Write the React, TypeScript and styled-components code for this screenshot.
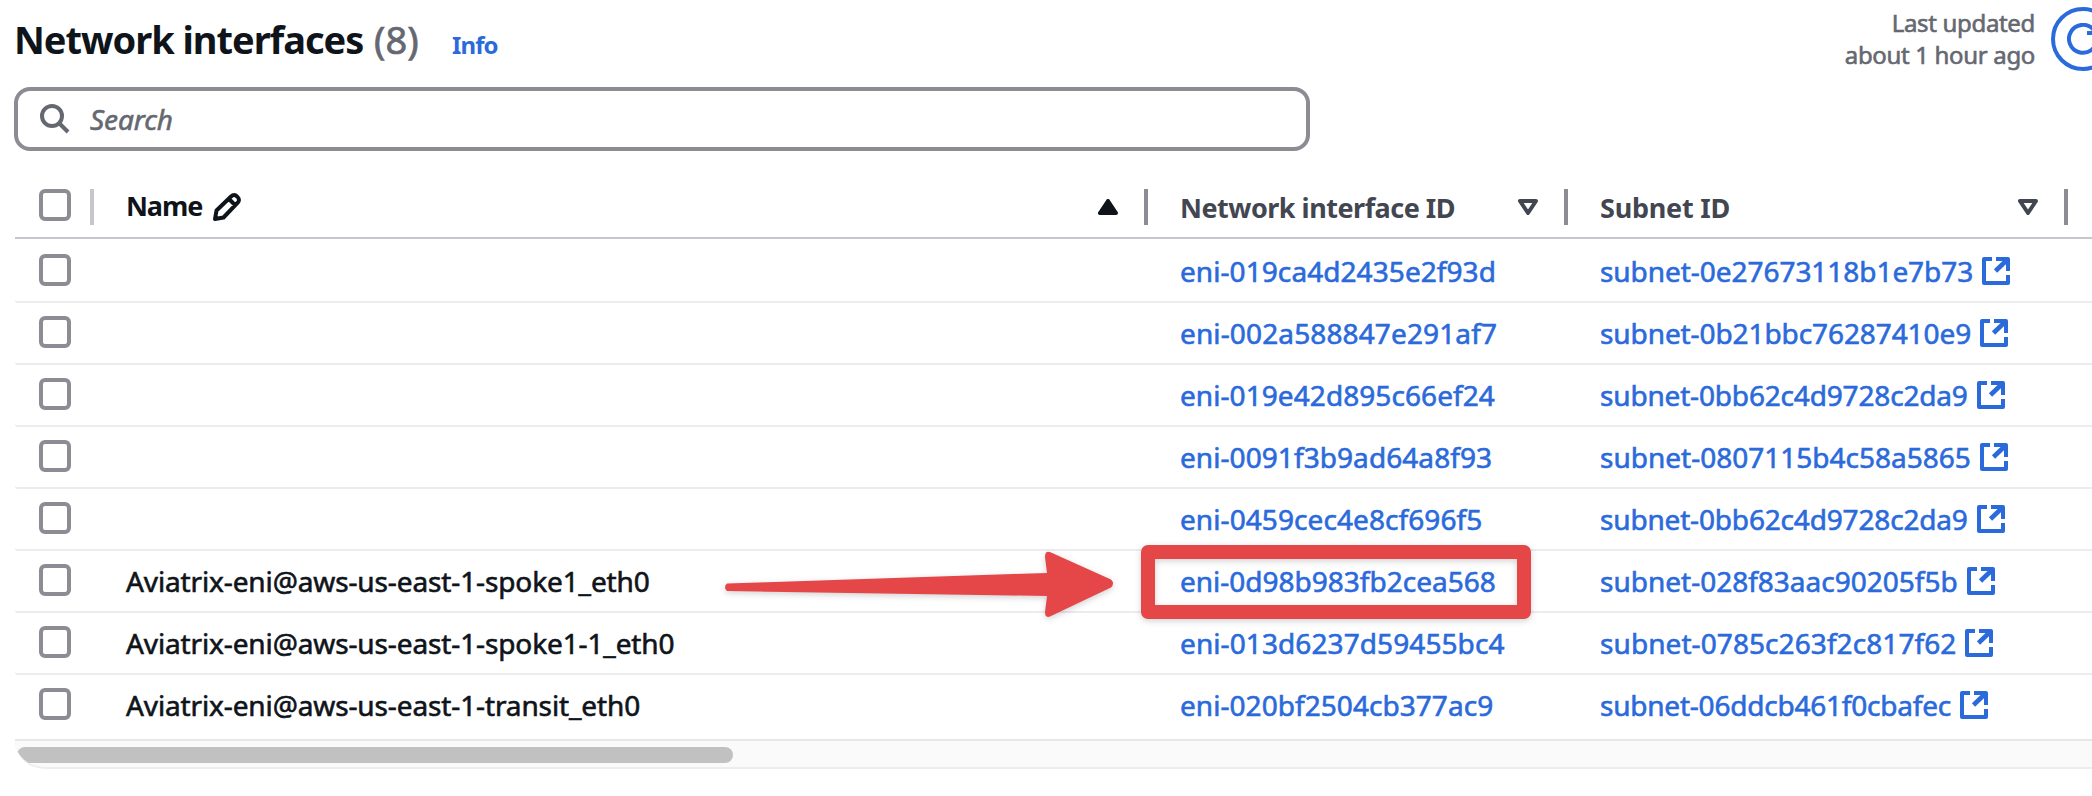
import React from 'react';
import styled, { createGlobalStyle } from 'styled-components';

const Global = createGlobalStyle`
  * { box-sizing: border-box; }
  html, body { margin: 0; padding: 0; background: #fff; overflow: hidden; }
  body { font-family: "Noto Sans", "Open Sans", sans-serif; color: #0f141a; }
`;

const Page = styled.main`
  position: relative;
  width: 2092px;
  height: 796px;
  overflow: hidden;
  background: #fff;
  padding-left: 14px;
`;

const Header = styled.header`
  display: flex;
  align-items: flex-start;
  justify-content: space-between;
  height: 87px;
  width: 2101px;
`;

const Heading = styled.div`
  display: flex;
  align-items: baseline;
  padding-top: 13px;
  line-height: 52px;
  white-space: nowrap;
`;

const Title = styled.h1`
  margin: 0;
  width: 360px;
  font-size: 38px;
  font-weight: 700;
  letter-spacing: -1.03px;
`;

const Counter = styled.span`
  width: 78px;
  font-size: 38px;
  color: #656871;
  -webkit-text-stroke: 0.7px currentColor;
`;

const InfoLink = styled.a`
  font-size: 24px;
  font-weight: 700;
  color: #2b6adb;
  letter-spacing: -0.9px;
`;

const Status = styled.div`
  display: flex;
  align-items: flex-start;
  gap: 16px;
`;

const Updated = styled.p`
  margin: 7px 0 0;
  font-size: 24px;
  line-height: 32px;
  text-align: right;
  color: #656871;
  letter-spacing: -0.33px;
  -webkit-text-stroke: 0.6px currentColor;
`;

const Line = styled.span`
  display: block;
`;

const RefreshButton = styled.button`
  display: flex;
  align-items: center;
  justify-content: center;
  width: 64px;
  height: 64px;
  margin-top: 7px;
  padding: 0;
  border: 4px solid #2b6adb;
  border-radius: 50%;
  background: #fff;
`;

const SearchBox = styled.div`
  display: flex;
  align-items: center;
  gap: 20px;
  width: 1296px;
  height: 64px;
  padding-left: 22px;
  border: 4px solid #8c8c94;
  border-radius: 16px;
  color: #656871;
`;

const Placeholder = styled.span`
  font-size: 28px;
  font-style: italic;
  letter-spacing: -0.1px;
  -webkit-text-stroke: 0.6px currentColor;
`;

const Table = styled.div`
  margin-left: 1px;
  width: 2077px;
  overflow: hidden;
`;

const GridRow = styled.div`
  display: grid;
  grid-template-columns: 79px 1054px 420px 500px 24px;
`;

const HeadRow = styled(GridRow)`
  height: 88px;
  padding-top: 38px;
  border-bottom: 2px solid #c6c6cd;
  border-top-left-radius: 3px;
`;

const HeadCell = styled.div<{ $muted?: boolean }>`
  display: flex;
  height: 36px;
  align-items: flex-start;
  padding-left: 32px;
  border-right: 4px solid #8c8c94;
  color: ${(p) => (p.$muted ? '#424650' : '#0f141a')};
`;

const SelectHead = styled.div`
  height: 36px;
  padding-left: 24px;
  border-right: 4px solid #c6c6cd;
`;

const HeadLabel = styled.span<{ $track: number; $line: number }>`
  flex: 1;
  display: flex;
  align-items: flex-start;
  gap: 11px;
  font-size: 27px;
  font-weight: 700;
  line-height: ${(p) => p.$line}px;
  white-space: nowrap;
  letter-spacing: ${(p) => p.$track}px;
`;

const EditIcon = styled.svg`
  width: 28px;
  height: 28px;
  margin-top: 4px;
`;

const SortIcon = styled.svg`
  width: 20px;
  height: 16px;
  margin: 10px 26px 0 0;
`;

const Row = styled(GridRow)<{ $first?: boolean; $last?: boolean }>`
  height: ${(p) => (p.$first || p.$last ? 64 : 62)}px;
  padding-top: ${(p) => (p.$first ? 15 : 13)}px;
  border-bottom: ${(p) => (p.$last ? 'none' : '2px solid #ebebf0')};
  border-bottom-left-radius: 3px;
`;

const Cell = styled.div`
  display: flex;
  align-items: flex-start;
  padding-left: 32px;
  font-size: 28px;
  line-height: 34px;
  white-space: nowrap;
  -webkit-text-stroke: 0.6px currentColor;
`;

const SelectCell = styled.div`
  padding-left: 24px;
`;

const Checkbox = styled.span`
  display: block;
  width: 32px;
  height: 32px;
  border: 4px solid #8c8c94;
  border-radius: 6px;
`;

const Name = styled.span`
  letter-spacing: -0.12px;
`;

const Link = styled.a<{ $track: number }>`
  color: #2b6adb;
  letter-spacing: ${(p) => p.$track}px;
`;

const ExternalIcon = styled.svg`
  width: 28px;
  height: 28px;
  margin: 3px 0 0 9px;
`;

const ScrollTrack = styled.div`
  height: 30px;
  width: 2077px;
  padding-top: 6px;
  border-top: 2px solid #e7e7e7;
  border-bottom: 2px solid #ededed;
  border-bottom-left-radius: 30px 28px;
  background: #fafafa;
  overflow: hidden;
`;

const ScrollThumb = styled.div`
  width: 716px;
  height: 16px;
  margin-left: 2px;
  border-radius: 8px;
  background: #c1c1c1;
`;

const Highlight = styled.div`
  position: absolute;
  left: 1141px;
  top: 545px;
  width: 390px;
  height: 74px;
  border: 14px solid #e54749;
  border-radius: 7px;
  filter: drop-shadow(0 2px 3px rgba(0, 0, 0, 0.18));
`;

const Arrow = styled.svg`
  position: absolute;
  left: 715px;
  top: 540px;
  width: 410px;
  height: 90px;
  filter: drop-shadow(0 2px 3px rgba(0, 0, 0, 0.18));
`;

type Eni = { name?: string; eni: string; subnet: string; eniTrack: number; subnetTrack: number };

const rows: Eni[] = [
  { eni: 'eni-019ca4d2435e2f93d', subnet: 'subnet-0e27673118b1e7b73', eniTrack: 0.07, subnetTrack: -0.05 },
  { eni: 'eni-002a588847e291af7', subnet: 'subnet-0b21bbc76287410e9', eniTrack: 0.13, subnetTrack: -0.09 },
  { eni: 'eni-019e42d895c66ef24', subnet: 'subnet-0bb62c4d9728c2da9', eniTrack: 0.07, subnetTrack: -0.17 },
  { eni: 'eni-0091f3b9ad64a8f93', subnet: 'subnet-0807115b4c58a5865', eniTrack: 0.07, subnetTrack: 0 },
  { eni: 'eni-0459cec4e8cf696f5', subnet: 'subnet-0bb62c4d9728c2da9', eniTrack: 0.08, subnetTrack: -0.17 },
  { name: 'Aviatrix-eni@aws-us-east-1-spoke1_eth0', eni: 'eni-0d98b983fb2cea568', subnet: 'subnet-028f83aac90205f5b', eniTrack: 0, subnetTrack: 0 },
  { name: 'Aviatrix-eni@aws-us-east-1-spoke1-1_eth0', eni: 'eni-013d6237d59455bc4', subnet: 'subnet-0785c263f2c817f62', eniTrack: 0.09, subnetTrack: 0.08 },
  { name: 'Aviatrix-eni@aws-us-east-1-transit_eth0', eni: 'eni-020bf2504cb377ac9', subnet: 'subnet-06ddcb461f0cbafec', eniTrack: 0.05, subnetTrack: -0.22 },
];

const SortDown = () => (
  <SortIcon viewBox="0 0 20 16">
    <path d="M2 2h16l-8 12z" fill="none" stroke="#424650" strokeWidth="4" strokeLinejoin="round" />
  </SortIcon>
);

const External = () => (
  <ExternalIcon viewBox="0 0 28 28" fill="none" stroke="#2b6adb" strokeWidth="4">
    <path d="M10 2H2v24h24v-8M14 2h12v12" strokeLinejoin="round" />
    <path d="M25 3L13.500 14" strokeWidth="4.600" />
  </ExternalIcon>
);

export default function App() {
  return (
    <Page>
      <Global />
      <Header>
        <Heading>
          <Title>Network interfaces</Title>
          <Counter>(8)</Counter>
          <InfoLink>Info</InfoLink>
        </Heading>
        <Status>
          <Updated>
            <Line>Last updated</Line>
            <Line>about 1 hour ago</Line>
          </Updated>
          <RefreshButton aria-label="Refresh">
            <svg width="32" height="32" viewBox="0 0 32 32" fill="none" stroke="#2b6adb" strokeWidth="4">
              <path d="M30 16a14 14 0 1 1-4-10l4 4M20 10h10V0" />
            </svg>
          </RefreshButton>
        </Status>
      </Header>

      <SearchBox>
        <svg width="30" height="30" viewBox="0 0 30 30" fill="none" stroke="#656871" strokeWidth="4">
          <circle cx="12" cy="12" r="10" />
          <path d="M19 19l9 9" />
        </svg>
        <Placeholder>Search</Placeholder>
      </SearchBox>

      <Table>
        <HeadRow>
          <SelectHead><Checkbox /></SelectHead>
          <HeadCell>
            <HeadLabel $track={-1.1} $line={33}>
              Name
              <EditIcon viewBox="0 0 28 28" fill="none" stroke="#0f141a" strokeWidth="4" strokeLinejoin="round">
                <path d="M2 26l1.500-8.500L18.300 3.300a3.800 3.800 0 0 1 5.600 0l.800.800a3.800 3.800 0 0 1 0 5.600L10.500 24.500zM16 6l6 6" />
              </EditIcon>
            </HeadLabel>
            <SortIcon viewBox="0 0 20 16">
              <path d="M2 14h16L10 2z" fill="#0f141a" stroke="#0f141a" strokeWidth="4" strokeLinejoin="round" />
            </SortIcon>
          </HeadCell>
          <HeadCell $muted>
            <HeadLabel $track={-0.5} $line={37}>Network interface ID</HeadLabel>
            <SortDown />
          </HeadCell>
          <HeadCell $muted>
            <HeadLabel $track={-0.25} $line={37}>Subnet ID</HeadLabel>
            <SortDown />
          </HeadCell>
        </HeadRow>
        {rows.map((r, i) => (
          <Row key={r.eni} $first={i === 0} $last={i === rows.length - 1}>
            <SelectCell><Checkbox /></SelectCell>
            <Cell><Name>{r.name}</Name></Cell>
            <Cell><Link $track={r.eniTrack}>{r.eni}</Link></Cell>
            <Cell>
              <Link $track={r.subnetTrack}>{r.subnet}</Link>
              <External />
            </Cell>
          </Row>
        ))}
        <ScrollTrack><ScrollThumb /></ScrollTrack>
      </Table>

      <Arrow viewBox="0 0 410 90" fill="#e54749">
        <path d="M12 43.500L332 33L330 17Q330 10 336 12.500L396 39.500Q400 43.500 396 47.500L336 76Q330 79 330 72L332 56L12 51Q8 47 12 43.500z" />
      </Arrow>
      <Highlight />
    </Page>
  );
}
